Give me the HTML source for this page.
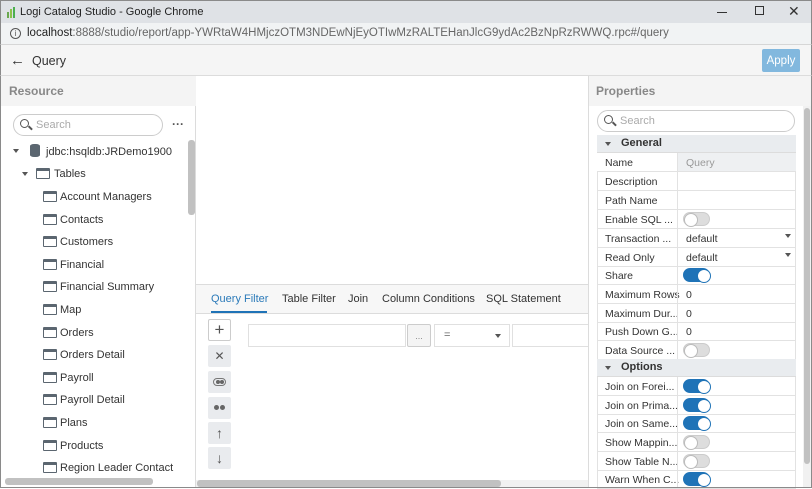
<!DOCTYPE html>
<html><head><meta charset="utf-8"><style>
*{box-sizing:border-box;margin:0;padding:0}
body{width:812px;height:488px;overflow:hidden;font-family:"Liberation Sans",sans-serif;font-size:11px;color:#333;background:#fff;position:relative}
.a{position:absolute}
.tb{left:0;top:0;width:812px;height:23px;background:#dfe2e6;border:1px solid #8a8a8a;border-bottom:none}
.ab{left:0;top:23px;width:812px;height:22px;background:#f1f3f4;border-left:1px solid #8a8a8a;border-right:1px solid #8a8a8a;border-bottom:1px solid #d6d6d6}
.hd{left:0;top:45px;width:812px;height:31px;background:#f5f5f5;border-bottom:1px solid #dcdcdc;border-left:1px solid #8a8a8a;border-right:1px solid #8a8a8a}
.row{position:absolute;left:42px;font-size:11px;color:#333}
.ti{position:absolute;width:14px;height:11px;border:1.5px solid #5b6670;border-top-width:3px;border-radius:1px}
.pr{position:absolute;left:597px;width:199px;height:19px;border-bottom:1px solid #e2e2e2;font-size:10.5px}
.pr .l{position:absolute;left:8px;top:4px;color:#333;white-space:nowrap}
.pr .v{position:absolute;left:80px;top:0;height:18px;width:119px;border-left:1px solid #e2e2e2;padding:4px 8px}
.tg{position:absolute;left:5px;top:2px;width:27px;height:14px;border-radius:7px;background:#ddd;border:1px solid #ccc}
.tg::after{content:"";position:absolute;left:0;top:0;width:12px;height:12px;border-radius:50%;background:#fff;border:1px solid #bbb}
.tg.on{background:#1f73b7;border-color:#1f73b7}
.tg.on::after{left:13px;border-color:#1f73b7}
.sec{position:absolute;left:597px;width:199px;height:18px;background:#e9ecef;border-bottom:1px solid #dcdcdc;font-weight:bold;font-size:11px;padding:2px 0 0 24px}
.sec::before{content:"";position:absolute;left:8px;top:7px;border-left:3.5px solid transparent;border-right:3.5px solid transparent;border-top:4px solid #555}
.btn{position:absolute;left:208px;width:23px;height:22px;background:#e9ebee;border-radius:2px;color:#555;text-align:center;font-size:14px;line-height:22px}
</style></head><body>
<div class="a tb">
 <div class="a" style="left:6px;top:6px;width:10px;height:11px">
  <div class="a" style="left:0;top:5px;width:2px;height:6px;background:#6aa84f"></div>
  <div class="a" style="left:3px;top:2px;width:2px;height:9px;background:#8bc34a"></div>
  <div class="a" style="left:6px;top:0;width:2px;height:11px;background:#4caf50"></div>
 </div>
 <div class="a" style="left:19px;top:5px;font-size:11px;color:#222">Logi Catalog Studio - Google Chrome</div>
 <div class="a" style="left:716px;top:11px;width:10px;height:1px;background:#333"></div>
 <div class="a" style="left:754px;top:5px;width:9px;height:9px;border:1px solid #333"></div>
 <div class="a" style="left:787px;top:2px;font-size:14px;color:#333">✕</div>
</div>
<div class="a ab">
 <div class="a" style="left:9px;top:5px;width:11px;height:11px;border:1px solid #555;border-radius:50%;font-size:8px;text-align:center;line-height:9px;color:#555">i</div>
 <div class="a" style="left:26px;top:4px;font-size:11.5px;color:#222">localhost<span style="color:#666">:8888/studio/report/app-YWRtaW4HMjczOTM3NDEwNjEyOTIwMzRALTEHanJlcG9ydAc2BzNpRzRWWQ.rpc#/query</span></div>
</div>
<div class="a hd">
 <div class="a" style="left:9px;top:7px;font-size:15px;color:#333">←</div>
 <div class="a" style="left:31px;top:9px;font-size:12.5px;color:#333">Query</div>
 <div class="a" style="left:761px;top:4px;width:38px;height:23px;background:#82b8de;border-radius:2px;color:#fff;font-size:11.5px;display:flex;align-items:center;justify-content:center">Apply</div>
</div>
<!-- left panel -->
<div class="a" style="left:0;top:76px;width:196px;height:412px;border-left:1px solid #8a8a8a;border-right:1px solid #dcdcdc;background:#fff">
 <div class="a" style="left:0;top:0;width:195px;height:30px;background:#f4f4f4;padding:8px 8px;font-weight:bold;font-size:12px;color:#888">Resource</div>
 <div class="a" style="left:12px;top:38px;width:150px;height:22px;border:1px solid #ccc;border-radius:11px">
  <div class="a" style="left:6px;top:4px;width:9px;height:9px;border:1.5px solid #555;border-radius:50%"></div>
  <div class="a" style="left:14px;top:12px;width:5px;height:1.5px;background:#555;transform:rotate(45deg)"></div>
  <div class="a" style="left:22px;top:4px;color:#aaa;font-size:11px">Search</div>
 </div>
 <div class="a" style="left:171px;top:41px;color:#555;font-size:12px;font-weight:bold">···</div>
 <div class="a" style="left:12px;top:73px;border-left:3.5px solid transparent;border-right:3.5px solid transparent;border-top:4px solid #555"></div>
 <div class="a" style="left:29px;top:68px;width:10px;height:13px;background:#5b6670;border-radius:4px/2px"></div>
 <div class="a" style="left:45px;top:70px;font-size:11px">jdbc:hsqldb:JRDemo1900</div>
 <div class="a" style="left:21px;top:96px;border-left:3.5px solid transparent;border-right:3.5px solid transparent;border-top:4px solid #555"></div>
 <div class="ti" style="left:35px;top:92px"></div>
 <div class="a" style="left:53px;top:92px;font-size:11px">Tables</div>
 <div class="a" style="left:187px;top:64px;width:7px;height:75px;background:#c1c1c1;border-radius:3px"></div>
 <div class="a" style="left:4px;top:402px;width:148px;height:7px;background:#c1c1c1;border-radius:3px"></div>
</div>
<!-- center -->
<div class="a" style="left:196px;top:284px;width:392px;height:30px;background:#f7f7f7;border-top:1px solid #dcdcdc;border-bottom:1px solid #dcdcdc"></div>
<div class="a" style="left:211px;top:293px;font-size:11px;color:#2b7ab9">Query Filter</div>
<div class="a" style="left:211px;top:311px;width:56px;height:2px;background:#1f73b7"></div>
<div class="a" style="left:282px;top:293px;font-size:11px">Table Filter</div>
<div class="a" style="left:348px;top:293px;font-size:11px">Join</div>
<div class="a" style="left:382px;top:293px;font-size:11px">Column Conditions</div>
<div class="a" style="left:486px;top:293px;font-size:11px">SQL Statement</div>
<div class="btn" style="top:319px;background:#fff;border:1px solid #ccc;font-size:17px;line-height:19px">+</div>
<div class="btn" style="top:345px;font-size:12px">✕</div>
<div class="btn" style="top:371px"><div class="a" style="left:5px;top:7px;width:13px;height:8px;border:1px solid #777;border-radius:4px"></div><div class="a" style="left:8px;top:9px;width:4px;height:4px;background:#666;border-radius:50%"></div><div class="a" style="left:12px;top:9px;width:4px;height:4px;background:#666;border-radius:50%"></div></div>
<div class="btn" style="top:397px"><div class="a" style="left:6px;top:8px;width:5px;height:5px;background:#666;border-radius:50%"></div><div class="a" style="left:12px;top:8px;width:5px;height:5px;background:#666;border-radius:50%"></div></div>
<div class="btn" style="top:422px">↑</div>
<div class="btn" style="top:447px">↓</div>
<div class="a" style="left:248px;top:324px;width:158px;height:23px;border:1px solid #e0e0e0"></div>
<div class="a" style="left:407px;top:324px;width:24px;height:23px;border:1px solid #ccc;background:#f4f4f4;border-radius:2px;text-align:center;font-size:9px;color:#888;line-height:22px">...</div>
<div class="a" style="left:434px;top:324px;width:76px;height:23px;border:1px solid #e0e0e0;padding:4px 9px;color:#666">=<div class="a" style="left:60px;top:9px;border-left:3.5px solid transparent;border-right:3.5px solid transparent;border-top:4px solid #555"></div></div>
<div class="a" style="left:512px;top:324px;width:76px;height:23px;border:1px solid #e0e0e0;border-right:none"></div>
<div class="a" style="left:196px;top:480px;width:392px;height:8px;background:#f1f1f1"></div>
<div class="a" style="left:197px;top:480px;width:304px;height:7px;background:#c1c1c1;border-radius:3px"></div>
<!-- right -->
<div class="a" style="left:588px;top:76px;width:224px;height:412px;border-left:1px solid #dcdcdc;border-right:1px solid #8a8a8a;background:#fff"></div>
<div class="a" style="left:589px;top:76px;width:222px;height:30px;background:#f4f4f4;padding:8px 7px;font-weight:bold;font-size:12px;color:#888">Properties</div>
<div class="a" style="left:597px;top:110px;width:198px;height:22px;border:1px solid #ccc;border-radius:11px">
 <div class="a" style="left:6px;top:4px;width:9px;height:9px;border:1.5px solid #555;border-radius:50%"></div>
 <div class="a" style="left:14px;top:12px;width:5px;height:1.5px;background:#555;transform:rotate(45deg)"></div>
 <div class="a" style="left:22px;top:4px;color:#aaa;font-size:11px">Search</div>
</div>
<div class="a" style="left:597px;top:135px;width:199px;height:353px;border-left:1px solid #e2e2e2;border-right:1px solid #e2e2e2"></div>
<div class="a" style="left:803px;top:106px;width:8px;height:382px;background:#f1f1f1"></div>
<div class="a" style="left:804px;top:108px;width:6px;height:356px;background:#c1c1c1;border-radius:3px"></div>
<div class="sec" style="top:135px">General</div>
<div class="pr" style="top:153px;background:#fff"><span class="l">Name</span><div class="v" style="background:#eef0f2;color:#999">Query</div></div>
<div class="pr" style="top:172px"><span class="l">Description</span><div class="v"></div></div>
<div class="pr" style="top:191px"><span class="l">Path Name</span><div class="v"></div></div>
<div class="pr" style="top:210px"><span class="l">Enable SQL ...</span><div class="v"><div class="tg"></div></div></div>
<div class="pr" style="top:229px"><span class="l">Transaction ...</span><div class="v">default<div class="a" style="left:107px;top:5px;border-left:3px solid transparent;border-right:3px solid transparent;border-top:4px solid #555"></div></div></div>
<div class="pr" style="top:248px"><span class="l">Read Only</span><div class="v">default<div class="a" style="left:107px;top:5px;border-left:3px solid transparent;border-right:3px solid transparent;border-top:4px solid #555"></div></div></div>
<div class="pr" style="top:266px"><span class="l">Share</span><div class="v"><div class="tg on"></div></div></div>
<div class="pr" style="top:285px"><span class="l">Maximum Rows</span><div class="v">0</div></div>
<div class="pr" style="top:304px"><span class="l">Maximum Dur...</span><div class="v">0</div></div>
<div class="pr" style="top:322px"><span class="l">Push Down G...</span><div class="v">0</div></div>
<div class="pr" style="top:341px"><span class="l">Data Source ...</span><div class="v"><div class="tg"></div></div></div>
<div class="sec" style="top:359px">Options</div>
<div class="pr" style="top:377px"><span class="l">Join on Forei...</span><div class="v"><div class="tg on"></div></div></div>
<div class="pr" style="top:396px"><span class="l">Join on Prima...</span><div class="v"><div class="tg on"></div></div></div>
<div class="pr" style="top:414px"><span class="l">Join on Same...</span><div class="v"><div class="tg on"></div></div></div>
<div class="pr" style="top:433px"><span class="l">Show Mappin...</span><div class="v"><div class="tg"></div></div></div>
<div class="pr" style="top:452px"><span class="l">Show Table N...</span><div class="v"><div class="tg"></div></div></div>
<div class="pr" style="top:470px"><span class="l">Warn When C...</span><div class="v"><div class="tg on"></div></div></div>
<div class="a" style="left:0;top:487px;width:812px;height:1px;background:#8a8a8a"></div>
<!-- tree items -->
<div class="ti" style="left:43px;top:191px"></div><div class="row" style="left:60px;top:191px">Account Managers</div>
<div class="ti" style="left:43px;top:214px"></div><div class="row" style="left:60px;top:214px">Contacts</div>
<div class="ti" style="left:43px;top:236px"></div><div class="row" style="left:60px;top:236px">Customers</div>
<div class="ti" style="left:43px;top:259px"></div><div class="row" style="left:60px;top:259px">Financial</div>
<div class="ti" style="left:43px;top:281px"></div><div class="row" style="left:60px;top:281px">Financial Summary</div>
<div class="ti" style="left:43px;top:304px"></div><div class="row" style="left:60px;top:304px">Map</div>
<div class="ti" style="left:43px;top:327px"></div><div class="row" style="left:60px;top:327px">Orders</div>
<div class="ti" style="left:43px;top:349px"></div><div class="row" style="left:60px;top:349px">Orders Detail</div>
<div class="ti" style="left:43px;top:372px"></div><div class="row" style="left:60px;top:372px">Payroll</div>
<div class="ti" style="left:43px;top:394px"></div><div class="row" style="left:60px;top:394px">Payroll Detail</div>
<div class="ti" style="left:43px;top:417px"></div><div class="row" style="left:60px;top:417px">Plans</div>
<div class="ti" style="left:43px;top:440px"></div><div class="row" style="left:60px;top:440px">Products</div>
<div class="ti" style="left:43px;top:462px"></div><div class="row" style="left:60px;top:462px">Region Leader Contact</div>
</body></html>
